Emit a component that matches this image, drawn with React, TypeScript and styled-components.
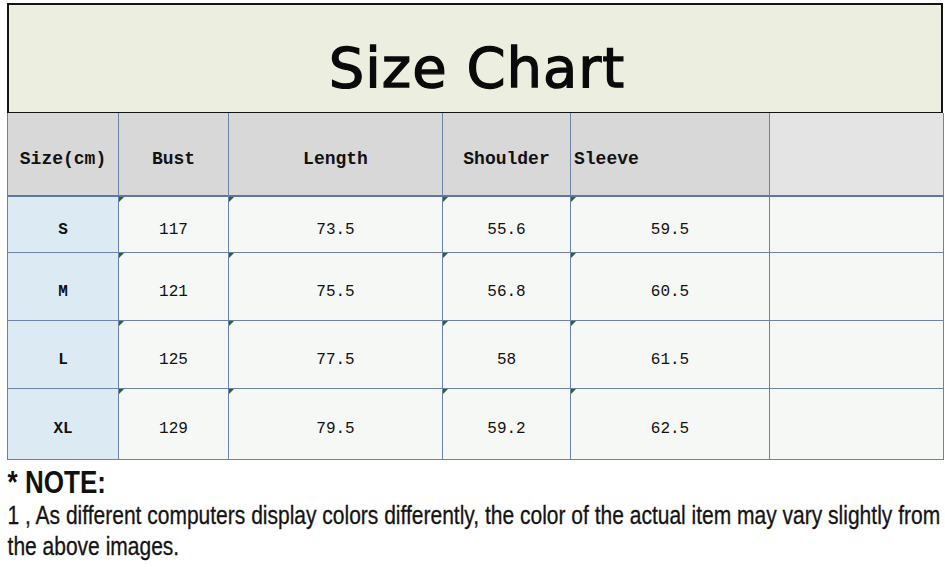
import React from "react";
import styled, { createGlobalStyle } from "styled-components";

const Global = createGlobalStyle`
  html, body { margin: 0; padding: 0; background: #ffffff; }
  body { width: 945px; height: 567px; overflow: hidden; }
`;

const Page = styled.div`
  padding: 3px 0 0 7px;
  width: 945px;
  box-sizing: border-box;
`;

const Sheet = styled.div`
  width: 936px;
`;

const TitleBox = styled.div`
  height: 110px;
  box-sizing: border-box;
  border: 2px solid #141414;
  border-bottom-width: 1px;
  background: #eceedf;
  display: flex;
  align-items: center;
  justify-content: center;
  padding-top: 18px;
`;

const Title = styled.h1`
  margin: 0;
  font-family: "DejaVu Sans", sans-serif;
  font-weight: 400;
  font-size: 56px;
  letter-spacing: 1px;
  color: #0a0a0a;
  padding-left: 4px;
  -webkit-text-stroke: 1.3px #0a0a0a;
`;

const Grid = styled.div`
  display: grid;
  grid-template-columns: 111px 110px 214px 128px 199px 174px;
  grid-template-rows: 84px 56px 68px 68px 71px;
  border-left: 1px solid #6c82a6;
`;

type CellProps = { $kind: "head" | "headBlank" | "size" | "data" | "blank"; $align?: "left" | "center"; $mark?: boolean };

const Cell = styled.div<CellProps>`
  position: relative;
  box-sizing: border-box;
  display: flex;
  align-items: center;
  justify-content: ${(p) => (p.$align === "left" ? "flex-start" : "center")};
  padding-left: ${(p) => (p.$align === "left" ? "3px" : "0")};
  border-right: 1px solid #6c82a6;
  border-bottom: ${(p) => (p.$kind === "head" || p.$kind === "headBlank" ? "2px solid #5a78a6" : "1px solid #6c82a6")};
  background: ${(p) =>
    p.$kind === "head"
      ? "#d8d8d8"
      : p.$kind === "headBlank"
      ? "#e4e4e4"
      : p.$kind === "size"
      ? "#dbeaf3"
      : "#f5f8f4"};
  font-family: "Liberation Mono", "DejaVu Sans Mono", monospace;
  font-size: ${(p) => (p.$kind === "head" ? "18px" : "16px")};
  font-weight: ${(p) => (p.$kind === "head" || p.$kind === "size" ? 700 : 400)};
  color: #111;
  padding-top: ${(p) => (p.$kind === "head" ? "10px" : "10px")};

  &::before {
    content: "";
    display: ${(p) => (p.$mark ? "block" : "none")};
    position: absolute;
    left: 0;
    top: 0;
    width: 0;
    height: 0;
    border-top: 5px solid #1f6a2e;
    border-right: 5px solid transparent;
  }
`;

const Notes = styled.div`
  padding-top: 7px;
  margin-left: -7px;
  width: 945px;
  overflow: hidden;
`;

const Condensed = styled.div<{ $scale: number; $width: number }>`
  width: ${(p) => p.$width}px;
  transform: scaleX(${(p) => p.$scale});
  transform-origin: left top;
  padding-left: 9px;
  box-sizing: border-box;
`;

const NoteTitle = styled.div`
  font-family: "Liberation Sans", Arial, sans-serif;
  font-weight: 700;
  font-size: 31px;
  line-height: 32px;
  color: #111;
`;

const NoteText = styled.p`
  margin: 0;
  padding-top: 1px;
  font-family: "Liberation Sans", Arial, sans-serif;
  font-size: 25px;
  line-height: 31px;
  color: #141414;
  -webkit-text-stroke: 0.3px #141414;
`;

const headers = ["Size(cm)", "Bust", "Length", "Shoulder", "Sleeve"];
const rows = [
  ["S", "117", "73.5", "55.6", "59.5"],
  ["M", "121", "75.5", "56.8", "60.5"],
  ["L", "125", "77.5", "58", "61.5"],
  ["XL", "129", "79.5", "59.2", "62.5"],
];

export default function App() {
  return (
    <>
      <Global />
      <Page>
        <Sheet>
          <TitleBox>
            <Title>Size Chart</Title>
          </TitleBox>
          <Grid>
            {headers.map((h, i) => (
              <Cell key={h} $kind="head" $align={i === 4 ? "left" : "center"}>
                {h}
              </Cell>
            ))}
            <Cell $kind="headBlank" />
            {rows.map((r) => (
              <React.Fragment key={r[0]}>
                {r.map((v, i) => (
                  <Cell key={i} $kind={i === 0 ? "size" : "data"} $mark={i > 0}>
                    {v}
                  </Cell>
                ))}
                <Cell $kind="blank" />
              </React.Fragment>
            ))}
          </Grid>
        </Sheet>
        <Notes>
          <Condensed $scale={0.84} $width={1122}>
            <NoteTitle>* NOTE:</NoteTitle>
            <NoteText>
              1 , As different computers display colors differently, the color of the actual item may vary slightly from the above images.
            </NoteText>
          </Condensed>
        </Notes>
      </Page>
    </>
  );
}
